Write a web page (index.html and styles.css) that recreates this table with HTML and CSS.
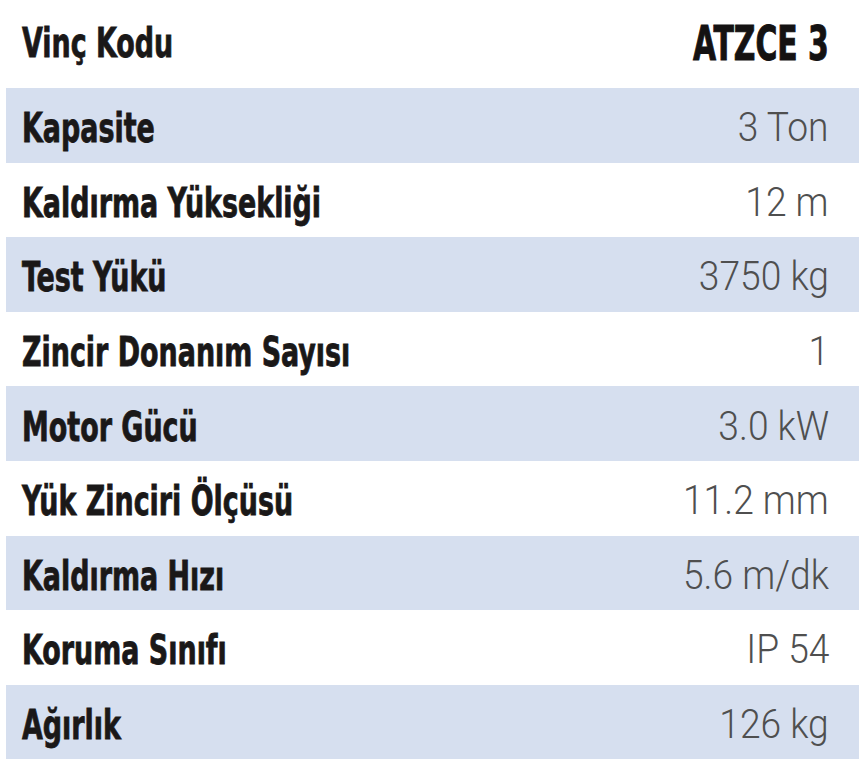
FILE: index.html
```html
<!DOCTYPE html>
<html lang="tr">
<head>
<meta charset="utf-8">
<title>ATZCE 3</title>
<link rel="stylesheet" href="styles.css">
</head>
<body>
<div class="spec">
  <div class="head">
    <span class="label">Vinç Kodu</span>
    <span class="code">ATZCE 3</span>
  </div>
  <div class="row alt"><span class="label">Kapasite</span><span class="value">3 Ton</span></div>
  <div class="row"><span class="label">Kaldırma Yüksekliği</span><span class="value">12 m</span></div>
  <div class="row alt"><span class="label">Test Yükü</span><span class="value">3750 kg</span></div>
  <div class="row"><span class="label">Zincir Donanım Sayısı</span><span class="value">1</span></div>
  <div class="row alt"><span class="label">Motor Gücü</span><span class="value">3.0 kW</span></div>
  <div class="row"><span class="label">Yük Zinciri Ölçüsü</span><span class="value">11.2 mm</span></div>
  <div class="row alt"><span class="label">Kaldırma Hızı</span><span class="value">5.6 m/dk</span></div>
  <div class="row"><span class="label">Koruma Sınıfı</span><span class="value">IP 54</span></div>
  <div class="row alt"><span class="label">Ağırlık</span><span class="value">126 kg</span></div>
</div>
</body>
</html>
```
FILE: styles.css
```css
html, body {
  margin: 0;
  padding: 0;
  background: #ffffff;
}

.spec {
  width: 853px;
  margin-left: 6px;
  display: flex;
  flex-direction: column;
}

.head {
  height: 88px;
  box-sizing: border-box;
  padding: 23px 30px 0 16px;
  display: flex;
  justify-content: space-between;
  align-items: flex-start;
}

.row {
  height: 74.6px;
  box-sizing: border-box;
  padding: 6px 30px 0 16px;
  display: flex;
  justify-content: space-between;
  align-items: center;
}

.row.alt {
  background: #d6dfef;
}

.label {
  display: inline-block;
  font-family: "DejaVu Sans Condensed", "Liberation Sans", sans-serif;
  font-weight: 700;
  font-size: 40px;
  line-height: 1;
  color: #1a1818;
  -webkit-text-stroke: 0.8px #1a1818;
  white-space: nowrap;
  transform: scaleX(0.748);
  transform-origin: left center;
}

.code {
  display: inline-block;
  margin-top: -4px;
  font-family: "DejaVu Sans Condensed", "Liberation Sans", sans-serif;
  font-weight: 700;
  font-size: 48px;
  line-height: 1;
  color: #141212;
  -webkit-text-stroke: 1px #141212;
  white-space: nowrap;
  transform: scaleX(0.69);
  transform-origin: right center;
}

.value {
  display: inline-block;
  font-family: Roboto, "Liberation Sans", sans-serif;
  font-weight: 300;
  font-size: 40px;
  line-height: 1;
  color: #4f4f4f;
  white-space: nowrap;
  transform: scaleX(0.93);
  transform-origin: right center;
}
```
